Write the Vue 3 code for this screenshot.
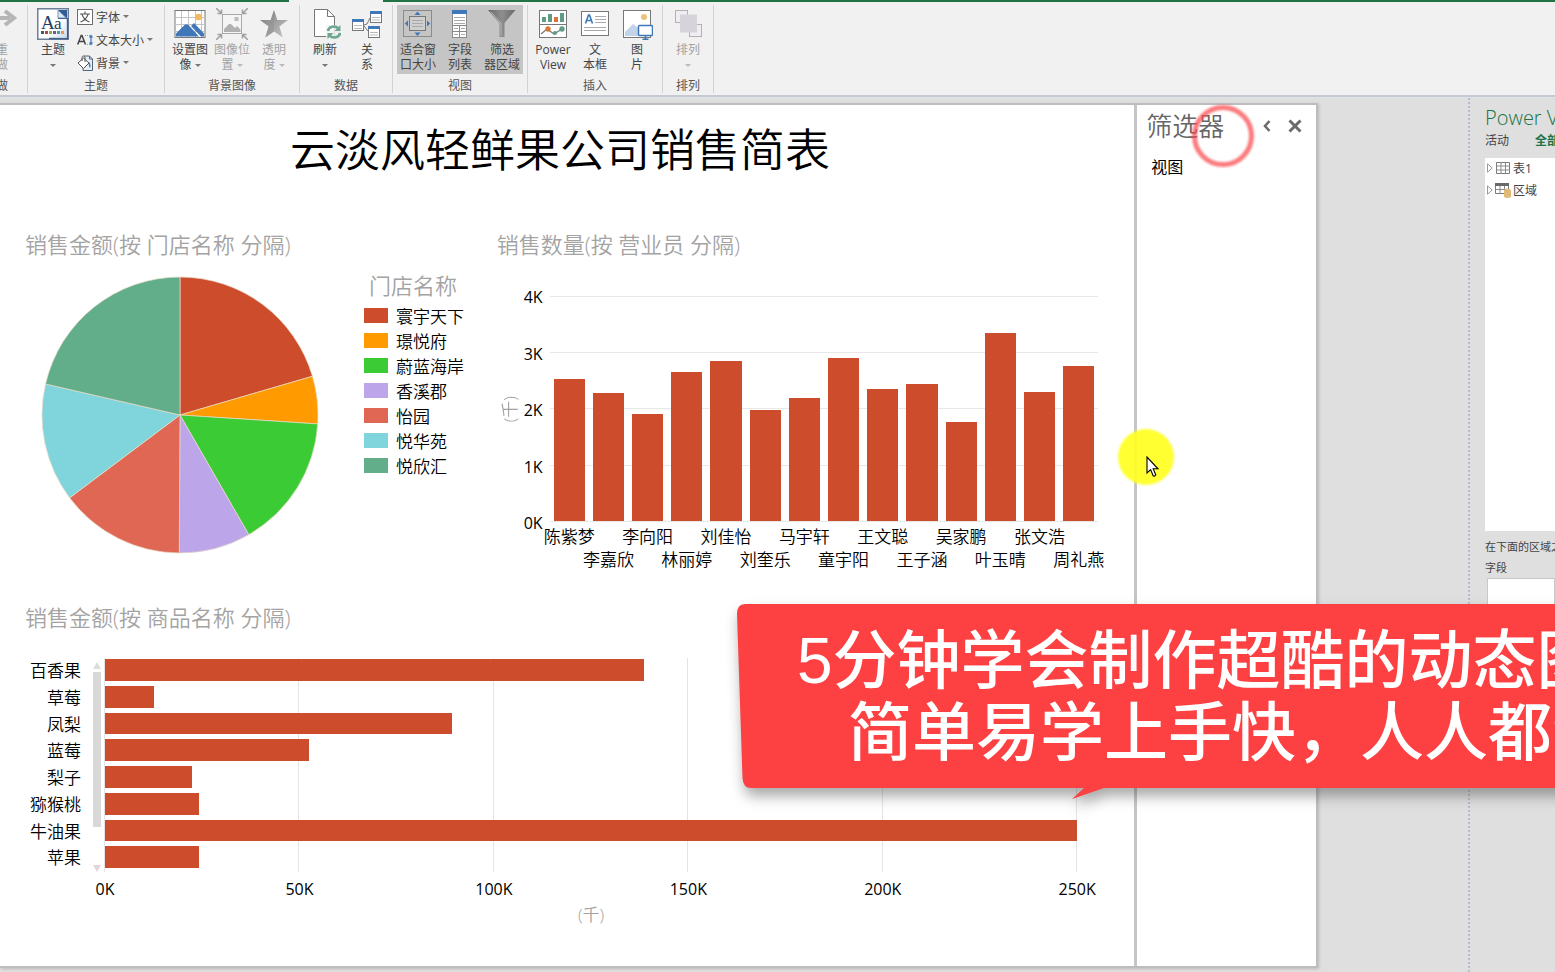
<script setup>
const ribbon = [
  {
    label: '背景图像',
    tools: [
      { icon: 'image-set', lines: ['设置图', '像'], menu: true },
      { icon: 'image-pos', lines: ['图像位', '置'], menu: true, disabled: true },
      { icon: 'star', lines: ['透明', '度'], menu: true, disabled: true },
    ],
  },
  {
    label: '数据',
    tools: [
      { icon: 'refresh', lines: ['刷新', ''], menu: true },
      { icon: 'relation', lines: ['关', '系'] },
    ],
  },
  {
    label: '视图',
    tools: [
      { icon: 'fit', lines: ['适合窗', '口大小'], on: true },
      { icon: 'fields', lines: ['字段', '列表'], on: true },
      { icon: 'funnel', lines: ['筛选', '器区域'], on: true },
    ],
  },
  {
    label: '插入',
    tools: [
      { icon: 'power-view', lines: ['Power', 'View'] },
      { icon: 'textbox', lines: ['文', '本框'] },
      { icon: 'picture', lines: ['图', '片'] },
    ],
  },
  {
    label: '排列',
    tools: [{ icon: 'arrange', lines: ['排列', ''], menu: true, disabled: true }],
  },
]

const smallTools = [
  { icon: 'font', text: '字体' },
  { icon: 'text-size', text: '文本大小' },
  { icon: 'backdrop', text: '背景' },
]

// `end` is the slice's closing angle in degrees, clockwise from twelve o'clock.
const stores = [
  { name: '寰宇天下', color: '#cd4c2c', end: 73.7 },
  { name: '璟悦府', color: '#ff9a00', end: 93.7 },
  { name: '蔚蓝海岸', color: '#3acb35', end: 150.1 },
  { name: '香溪郡', color: '#bca5e8', end: 180.3 },
  { name: '怡园', color: '#df6753', end: 233.1 },
  { name: '悦华苑', color: '#80d5dc', end: 283 },
  { name: '悦欣汇', color: '#62ae8a', end: 360 },
]

function point(angle) {
  const a = (angle * Math.PI) / 180
  return `${(139 + 138 * Math.sin(a)).toFixed(2)} ${(139 - 138 * Math.cos(a)).toFixed(2)}`
}

const slices = stores.map((s, i) => {
  const start = i ? stores[i - 1].end : 0
  return {
    ...s,
    d: `M139 139L${point(start)}A138 138 0 ${s.end - start > 180 ? 1 : 0} 1 ${point(s.end)}Z`,
  }
})

const sellers = [
  ['陈紫梦', 2530], ['李嘉欣', 2270], ['李向阳', 1910], ['林丽婷', 2650],
  ['刘佳怡', 2850], ['刘奎乐', 1970], ['马宇轩', 2190], ['童宇阳', 2890],
  ['王文聪', 2340], ['王子涵', 2440], ['吴家鹏', 1760], ['叶玉晴', 3350],
  ['张文浩', 2290], ['周礼燕', 2760],
]
const yTicks = ['4K', '3K', '2K', '1K', '0K']

const goods = [
  ['百香果', 138700], ['草莓', 12600], ['凤梨', 89200], ['蓝莓', 52400],
  ['梨子', 22400], ['猕猴桃', 24200], ['牛油果', 250200], ['苹果', 24200],
]
const xTicks = ['0K', '50K', '100K', '150K', '200K', '250K']
</script>

<template>
  <div class="app">
    <svg class="sprite" aria-hidden="true">
      <defs>
        <linearGradient id="g-theme" x1="0" y1="0" x2="1" y2="1">
          <stop offset="0" stop-color="#fff" /><stop offset=".6" stop-color="#fff" /><stop offset="1" stop-color="#c9dcf0" />
        </linearGradient>
        <linearGradient id="g-star" x1="0" y1="0" x2="1" y2="1">
          <stop offset="0" stop-color="#777" /><stop offset="1" stop-color="#c9c9c9" />
        </linearGradient>
        <linearGradient id="g-funnel" x1="0" y1="0" x2="1" y2="0">
          <stop offset="0" stop-color="#6a6a6a" /><stop offset=".5" stop-color="#8e8e8e" /><stop offset="1" stop-color="#6a6a6a" />
        </linearGradient>
      </defs>
      <symbol id="i-redo" viewBox="0 0 32 32">
        <path d="M3 10h21M19 3l9 7-9 7" fill="none" stroke="#b5b5b5" stroke-width="4" />
      </symbol>
      <symbol id="i-theme" viewBox="0 0 32 32">
        <rect x=".75" y=".75" width="30.5" height="30.5" fill="#fff" stroke="#6c7f99" stroke-width="1.5" />
        <path d="M3 3h18l8 8v18H3z" fill="url(#g-theme)" />
        <path d="M21 2h9v9h-9z" fill="#2f5d94" /><path d="M21 2v8h8.5z" fill="#dbe7f4" stroke="#5f7fa8" stroke-width=".8" />
        <path d="M30.5 10v20.5H12" fill="none" stroke="#3c5f8c" stroke-width="1.5" />
        <text x="4" y="21" font-size="19" font-family="Liberation Serif, serif" fill="#1f4064">A</text>
        <text x="17" y="21" font-size="17" font-family="Liberation Serif, serif" fill="#1f4064">a</text>
        <path d="M4 23h3v3H4z" fill="#43597a" /><path d="M8 23h3v3H8z" fill="#b04a3a" />
        <path d="M12 23h3v3h-3z" fill="#9aa64a" /><path d="M16 23h3v3h-3z" fill="#76588f" />
        <path d="M20 23h3v3h-3z" fill="#4d9ab0" /><path d="M24 23h3v3h-3z" fill="#e09a4a" />
      </symbol>
      <symbol id="i-font" viewBox="0 0 16 16">
        <rect x=".5" y=".5" width="15" height="15" fill="#fff" stroke="#6d6d6d" />
        <path d="M8 2.500v2M3 5h10M5 5.500c1 3 3.500 6 7.500 7.500M11 5.500c-1 3-3.500 6-7.500 7.500" fill="none" stroke="#555" stroke-width="1.100" />
      </symbol>
      <symbol id="i-text-size" viewBox="0 0 16 16">
        <path d="M.7 12.500L4.200 3.500h.8l3.500 9M2 9.500h5.200" fill="none" stroke="#444" stroke-width="1.500" />
        <path d="M8 3.500h5M10 12.500h3" stroke="#999" stroke-dasharray="1 1" />
        <path d="M14 4v8M12.500 5.500L14 3.500l1.500 2M12.500 10.500l1.500 2 1.500-2" fill="none" stroke="#2f75b8" stroke-width="1.200" />
      </symbol>
      <symbol id="i-backdrop" viewBox="0 0 16 16">
        <path d="M7 1h5.500l3 3v11.500H6V12" fill="#e5edf6" stroke="#55677d" />
        <path d="M12.500 1v3h3" fill="none" stroke="#55677d" />
        <path d="M1 8l5.500-5 5.500 5-5.500 5.500z" fill="#fff" stroke="#555" /><path d="M5 6V2.500C5 .5 8 .5 8 2.500V7" fill="none" stroke="#555" />
        <path d="M12 7c2 2 1.500 5 1 6-1-1-1.500-3-1-6z" fill="#3f79bd" />
      </symbol>
      <symbol id="i-image-set" viewBox="0 0 32 32">
        <rect x="1" y="2.500" width="30" height="27" fill="#fff" stroke="#777" />
        <path d="M7.500 3v26M14.500 3v26M21.500 3v26M27.500 3v26M1 9.500h30M1 16.500h30M1 23.500h30" stroke="#c4c4c4" />
        <circle cx="24.500" cy="9" r="3.300" fill="#f0b95e" />
        <path d="M2 28.500v-3l9-9h3l11 12zM17 18l3-3 10 10.500v3h-3z" fill="#3f77b9" />
      </symbol>
      <symbol id="i-image-pos" viewBox="0 0 32 32">
        <rect x="6.500" y="6.500" width="19" height="19" fill="#f5f5f5" stroke="#a9a9a9" />
        <rect x="18.500" y="9" width="4" height="4" fill="#bcbcbc" />
        <path d="M8 24v-3l5-5h2l4 4 2-2 3.500 3.500V24z" fill="#b1b1b1" />
        <path d="M0 0l5.500 5.500M1.500 5.500h4v-4M32 0l-5.500 5.500M30.500 5.500h-4v-4M0 32l5.500-5.500M1.500 26.500h4v4M32 32l-5.500-5.500M30.500 26.500h-4v4" fill="none" stroke="#a0a0a0" stroke-width="1.500" />
      </symbol>
      <symbol id="i-star" viewBox="0 0 32 32">
        <path d="M16 2l3.300 10H30l-8.600 6.500 3.300 11L16 23.500l-8.700 6 3.300-11L2 12h10.700z" fill="url(#g-star)" />
        <path d="M16 2v21.500l-8.700 6 3.300-11z" fill="#8f8f8f" opacity=".45" />
      </symbol>
      <symbol id="i-refresh" viewBox="0 0 32 32">
        <path d="M5.500 1.500h13l7 7v20h-20z" fill="#fff" stroke="#777" />
        <path d="M18.500 1.500v7h7" fill="none" stroke="#777" />
        <rect x="17" y="17" width="15" height="14" fill="#f1f1f1" opacity=".8" />
        <path d="M19 23c.5-4.500 7-6 10.500-2.500M31 25c-.5 4.500-7 6-10.500 2.500" fill="none" stroke="#6ea78f" stroke-width="2.600" />
        <path d="M31.500 17v6h-6zM18.500 31v-6h6z" fill="#6ea78f" />
      </symbol>
      <symbol id="i-relation" viewBox="0 0 32 32">
        <path d="M13 17l3-1 3-6M13 18l4 5" fill="none" stroke="#777" />
        <g fill="#fff" stroke="#777"><rect x="1.500" y="11.500" width="11" height="11" /><rect x="19.500" y="3.500" width="11" height="11" /><rect x="17.500" y="18.500" width="11" height="11" /></g>
        <path d="M1 11h12v3H1zM19 3h12v3H19zM17 18h12v3H17z" fill="#3f77b9" />
        <path d="M3 17.500h8M3 20.500h8M21 9.500h8M21 12h8M19 24.500h8M19 27h8" stroke="#bbb" />
      </symbol>
      <symbol id="i-fit" viewBox="0 0 32 32">
        <rect x="1.500" y="2.500" width="28" height="26" fill="none" stroke="#8b8b8b" />
        <rect x="7.500" y="8.500" width="16" height="14" fill="#cfcfcf" stroke="#777" />
        <path d="M10 12.500h11M10 15.500h11M10 18.500h11" stroke="#aaa" />
        <path d="M12.500 7h6l-3-3.500zM12.500 24.500h6l-3 3.500zM6 12.500v6L2.800 15.500zM25 12.500v6l3.200-3z" fill="#3f77b9" />
      </symbol>
      <symbol id="i-fields" viewBox="0 0 32 32">
        <rect x="8.500" y="2.500" width="14" height="27" fill="#fff" stroke="#8b8b8b" />
        <path d="M8 2h15v4H8z" fill="#3f77b9" />
        <path d="M10 9.500h11M10 12.500h11M10 15.500h11M10 20.500h4M17 20.500h4M10 26.500h4M17 26.500h4" stroke="#aaa" />
        <path d="M8 17.500h15M8 23.500h15M15.500 17.500v12" stroke="#888" />
      </symbol>
      <symbol id="i-funnel" viewBox="0 0 32 32">
        <path d="M2 2h27.500L18.500 15v14h-5V15z" fill="url(#g-funnel)" /><path d="M5 4l10 11v13" fill="none" stroke="#b8b8b8" />
      </symbol>
      <symbol id="i-power-view" viewBox="0 0 32 32">
        <rect x="2.500" y="2.500" width="27" height="27" fill="#fff" stroke="#777" /><path d="M3 16.500h26" stroke="#777" />
        <path d="M5 9h4v5H5zM11 6h4v8h-4zM23 5h4v9h-4z" fill="#5f9c83" /><path d="M17 9h4v5h-4z" fill="#d9773a" />
        <path d="M4 26l6-5 7 5 8-5" fill="none" stroke="#777" stroke-width="1.300" />
        <circle cx="11" cy="21" r="2.700" fill="#d9773a" /><circle cx="18" cy="25" r="2" fill="#5f9c83" /><circle cx="25" cy="21" r="2.700" fill="#5f9c83" />
      </symbol>
      <symbol id="i-textbox" viewBox="0 0 32 32">
        <rect x="2.500" y="3.500" width="27" height="24" fill="#fff" stroke="#777" />
        <path d="M6.500 15.500L9.500 7h1l3 8.500M7.500 12.500h5" fill="none" stroke="#3f77b9" stroke-width="1.600" />
        <path d="M16 8.500h11M16 11.500h11M16 14.500h11M5 19.500h22M5 22.500h22" stroke="#aaa" />
      </symbol>
      <symbol id="i-picture" viewBox="0 0 32 32">
        <rect x="2.500" y="2.500" width="27" height="27" fill="#fff" stroke="#777" />
        <circle cx="23" cy="9" r="3" fill="#eec27c" /><path d="M4 28v-4l8-8 7 5v7z" fill="#c3d3ea" />
        <rect x="17.500" y="17.500" width="14" height="10" rx="1" fill="#fff" stroke="#3f77b9" stroke-width="1.500" />
        <path d="M24.500 28v2.500M21.500 31.200h6" stroke="#3f77b9" stroke-width="1.500" />
      </symbol>
      <symbol id="i-arrange" viewBox="0 0 32 32">
        <rect x="3.500" y="2.500" width="12" height="12" fill="#f1eef3" stroke="#b5b0b8" /><rect x="17.500" y="16.500" width="12" height="12" fill="#f1eef3" stroke="#b5b0b8" />
        <rect x="8" y="6.500" width="17" height="18" fill="#d6d3db" />
      </symbol>
      <symbol id="i-table" viewBox="0 0 16 16">
        <path d="M1.500 2.500h13v11h-13z" fill="#fff" stroke="#7a7a7a" /><path d="M1.500 6h13M1.500 10h13M6 2.500v11M10.500 2.500v11" stroke="#8a8a8a" />
      </symbol>
      <symbol id="i-range" viewBox="0 0 16 16">
        <path d="M.5 2.500h13v9H.5z" fill="#fff" stroke="#7a7a7a" /><path d="M0 1h14v3H0z" fill="#6a6a6a" /><path d="M.5 7.500h13M5 4v8M9.500 4v8" stroke="#8a8a8a" />
        <path d="M9 8q3.500-3 7 0v7q-3.500 2-7 0z" fill="#e3b976" />
      </symbol>
    </svg>

    <header class="ribbon">
      <div class="accent"><i class="green before"></i><i class="tab-gap"></i><i class="green after"></i></div>
      <div class="groups">
        <section class="group cut">
          <div class="tools">
            <button class="tool" disabled><svg class="icon"><use href="#i-redo" /></svg><span>重</span><span>做</span></button>
          </div>
          <div class="group-name">做</div>
        </section>
        <section class="group theme">
          <div class="tools">
            <button class="tool"><svg class="icon"><use href="#i-theme" /></svg><span>主题</span><span><i class="caret alone"></i></span></button>
            <div class="small-tools">
              <button v-for="t in smallTools" :key="t.icon" class="small-tool">
                <svg class="small-icon"><use :href="'#i-' + t.icon" /></svg>{{ t.text }}<i class="caret"></i>
              </button>
            </div>
          </div>
          <div class="group-name">主题</div>
        </section>
        <section v-for="g in ribbon" :key="g.label" class="group">
          <div class="tools">
            <button v-for="t in g.tools" :key="t.icon" class="tool" :class="{ on: t.on }" :disabled="t.disabled">
              <svg class="icon"><use :href="'#i-' + t.icon" /></svg>
              <span>{{ t.lines[0] }}</span>
              <span>{{ t.lines[1] }}<i v-if="t.menu" class="caret" :class="{ alone: !t.lines[1] }"></i></span>
            </button>
          </div>
          <div class="group-name">{{ g.label }}</div>
        </section>
      </div>
    </header>

    <main class="workspace">
      <div class="sheet">
        <div class="report">
          <h1>云淡风轻鲜果公司销售简表</h1>
          <div class="row">
            <section class="card pie-card">
              <h2>销售金额(按 门店名称 分隔)</h2>
              <div class="pie-body">
                <svg class="pie" viewBox="0 0 278 278">
                  <path v-for="s in slices" :key="s.name" :d="s.d" :fill="s.color" />
                </svg>
                <div class="legend">
                  <h3>门店名称</h3>
                  <ul>
                    <li v-for="s in stores" :key="s.name"><i class="swatch" :style="{ background: s.color }"></i>{{ s.name }}</li>
                  </ul>
                </div>
              </div>
            </section>
            <section class="card column-card">
              <h2>销售数量(按 营业员 分隔)</h2>
              <div class="columns">
                <div class="unit-y"><span>(千)</span></div>
                <div class="y-axis"><span v-for="t in yTicks" :key="t">{{ t }}</span></div>
                <div class="plot">
                  <div v-for="s in sellers" :key="s[0]" class="slot">
                    <div class="column" :style="{ height: s[1] / 40 + '%' }"></div>
                  </div>
                </div>
                <div class="names"><span v-for="s in sellers" :key="s[0]"><b>{{ s[0] }}</b></span></div>
              </div>
            </section>
          </div>
          <section class="card bar-card">
            <h2>销售金额(按 商品名称 分隔)</h2>
            <div class="bars">
              <div class="goods"><span v-for="g in goods" :key="g[0]">{{ g[0] }}</span></div>
              <div class="scroll"><i class="up"></i><i class="thumb"></i><i class="down"></i></div>
              <div class="bar-plot">
                <div v-for="g in goods" :key="g[0]" class="lane">
                  <div class="bar" :style="{ width: g[1] / 2500 + '%' }"></div>
                </div>
              </div>
              <div class="x-axis"><span v-for="t in xTicks" :key="t"><b>{{ t }}</b></span></div>
              <div class="unit-x">(千)</div>
            </div>
          </section>
        </div>
        <aside class="filters">
          <div class="filters-head">
            <h2>筛选器</h2>
            <button aria-label="折叠"><svg width="10" height="14" viewBox="0 0 10 14"><path d="M7.500 2L3 7l4.500 5" fill="none" stroke="#6b6b6b" stroke-width="2.600" /></svg></button>
            <button aria-label="关闭"><svg width="14" height="14" viewBox="0 0 14 14"><path d="M1.500 1.500l11 11M12.500 1.500l-11 11" fill="none" stroke="#6b6b6b" stroke-width="3" /></svg></button>
          </div>
          <a href="#" class="view-link">视图</a>
        </aside>
      </div>
      <div class="desk"></div>
      <aside class="fields">
        <h2>Power View 字段</h2>
        <nav><a href="#">活动</a><a href="#" class="current">全部</a></nav>
        <ul class="tree">
          <li><svg class="twist" viewBox="0 0 6 10"><path d="M.5 .8v8.400L5.200 5z" fill="#fff" stroke="#999" /></svg><svg class="node-icon"><use href="#i-table" /></svg>表1</li>
          <li><svg class="twist" viewBox="0 0 6 10"><path d="M.5 .8v8.400L5.200 5z" fill="#fff" stroke="#999" /></svg><svg class="node-icon"><use href="#i-range" /></svg>区域</li>
        </ul>
        <p>在下面的区域之间拖动字段:</p>
        <p>字段</p>
        <div class="well"></div>
      </aside>
    </main>

    <div class="ring"></div>
    <div class="halo"></div>
    <svg class="pointer" width="14" height="22" viewBox="0 0 14 22">
      <path d="M1 1v16l3.600-3.400 2.600 6.200q1.200 1 2.600-.8L7.200 12.800H12z" fill="#fff" stroke="#000" stroke-width="1.100" />
    </svg>
    <div class="callout">
      <svg class="callout-shape" width="860" height="204" viewBox="0 0 860 204">
        <path d="M10 2H860V186H369L337 197L349 186H16Q8 186 7.500 176L2 12Q2 2 10 2Z" fill="#fd4142" />
      </svg>
      <p class="line-one">5分钟学会制作超酷的动态图</p>
      <p class="line-two">简单易学上手快，人人都会</p>
    </div>
  </div>
</template>

<style>
body { margin: 0; overflow: hidden; }
</style>

<style scoped>
.app { position: relative; display: flex; flex-direction: column; height: 100vh; overflow: hidden; background: #dfdfdf; color: #000; font-family: "Open Sans", "Noto Sans CJK SC", sans-serif; }
.app * { box-sizing: border-box; }
h1, h2, h3, p, ul { margin: 0; padding: 0; font-weight: inherit; list-style: none; }
b { font-weight: inherit; }
a { color: inherit; text-decoration: none; }
button { border: 0; padding: 0; background: none; color: inherit; font: inherit; }
.sprite { position: absolute; width: 0; height: 0; }

.ribbon { flex: none; height: 97px; background: #f1f1f1; border-bottom: 2px solid #c6cad0; font-size: 12px; color: #444; }
.accent { display: flex; height: 2px; }
.green { background: #217346; }
.before { width: 289px; }
.tab-gap { width: 94px; }
.after { flex: 1; }
.groups { display: flex; height: 93px; padding-top: 3px; }
.group { display: flex; flex-direction: column; padding: 0 4px; border-right: 1px solid #d2d2d2; margin-bottom: 2px; }
.group-name { height: 18px; margin-top: 3px; line-height: 18px; text-align: center; color: #555; }
.cut { width: 28px; overflow: hidden; }
.cut .tool { margin-left: -23px; }
.cut .group-name { margin-left: -8px; text-align: left; }
.theme { width: 137px; }
.tools { display: flex; height: 69px; }
.tool { display: flex; flex-direction: column; align-items: center; width: 42px; height: 69px; padding-top: 3px; line-height: 15px; white-space: nowrap; }
.tool:disabled { color: #a3a3a3; }
.tool.on { background: #c5c5c5; }
.icon { display: block; width: 32px; height: 32px; margin-bottom: 2px; }
.tool span { height: 15px; }
.caret { display: inline-block; margin-left: 3px; border: 3px solid transparent; border-top-color: #777; border-bottom: 0; vertical-align: 2px; }
.alone { margin-left: 0; }
.tool:disabled .caret { border-top-color: #bbb; }
.small-tools { display: flex; flex-direction: column; margin-left: 3px; }
.small-tool { display: flex; align-items: center; height: 23px; white-space: nowrap; }
.small-icon { width: 16px; height: 16px; margin-right: 3px; }

.workspace { flex: 1; display: flex; min-height: 0; border-top: 1px solid #dfe3ea; }
.sheet { flex: 1318 1 0; display: flex; min-width: 0; margin: 5px 0 4px; background: #fff; border: 2px solid #bdbdbf; border-left: 0; box-shadow: 1px 1px 3px #bbb; font-weight: 350; }
.report { flex: 1; min-width: 0; padding: 13px 30px 0 25px; }
.desk { flex: 150 1 0; }
h1 { height: 64px; margin-bottom: 47px; padding-right: 9px; font-size: 45px; line-height: 64px; text-align: center; white-space: nowrap; }
.row { display: flex; height: 373px; }
.card h2 { height: 32px; font-size: 22px; line-height: 30px; color: #a3a3a3; white-space: nowrap; }
.pie-card { flex: 472 1 0; }
.column-card { flex: 608 1 0; }
.pie-body { display: flex; padding: 10px 0 0 16px; }
.pie { flex: none; width: 278px; height: 278px; margin: 5px 45px 0 0; }
.pie path { stroke: #e8dcc8; stroke-width: 1; stroke-opacity: .7; }
.legend h3 { height: 32px; padding-left: 5px; font-size: 22px; line-height: 28px; color: #a3a3a3; }
.legend li { display: flex; align-items: center; height: 25px; font-size: 17px; white-space: nowrap; }
.swatch { width: 24px; height: 15px; margin-right: 8px; }

.columns { display: grid; grid-template: 226px auto / 26px 27px 1fr; padding: 35px 6px 0 0; }
.unit-y { display: flex; align-items: center; justify-content: center; padding-right: 2px; font-size: 17px; color: #a3a3a3; }
.unit-y span { writing-mode: vertical-rl; text-orientation: sideways; transform: rotate(180deg); }
.y-axis { display: flex; flex-direction: column; justify-content: space-between; margin: -11px 7px -13px 0; font-size: 16px; line-height: 24px; text-align: right; font-weight: 400; }
.plot { display: flex; height: 226px; background: repeating-linear-gradient(#e8e8e8 0 1px, transparent 1px 25%); border-bottom: 1px solid #e8e8e8; }
.slot { flex: 1; display: flex; align-items: flex-end; padding: 0 4px; }
.column { width: 100%; background: #cd4c2c; }
.names { grid-column: 3; display: flex; padding-top: 3px; font-size: 17px; line-height: 24px; }
.names span { flex: 1; display: flex; justify-content: center; width: 0; white-space: nowrap; }
.names span:nth-child(even) { padding-top: 23px; }

.bars { display: grid; grid-template: 214px 34px 18px / 56px 12px 12px 1fr; padding: 24px 27px 0 0; }
.goods, .bar-plot { display: flex; flex-direction: column; font-size: 17px; line-height: 26px; }
.goods span { flex: 1; display: flex; align-items: flex-start; justify-content: flex-end; white-space: nowrap; }
.scroll { grid-column: 3; display: flex; flex-direction: column; align-items: flex-start; width: 8px; padding-top: 4px; }
.up, .down { border: 4px solid transparent; }
.up { border-top: 0; border-bottom: 7px solid #ddd; }
.down { margin-top: auto; border-bottom: 0; border-top: 7px solid #e3d6d9; }
.thumb { width: 8px; height: 155px; margin-top: 3px; background: #d8d8d8; }
.bar-plot { box-shadow: -1px 0 #e4e4e4; background: repeating-linear-gradient(90deg, transparent 0 calc(20% - 1px), #e4e4e4 calc(20% - 1px) 20%); }
.lane { flex: 1; display: flex; align-items: flex-start; padding: 1px 0 4px; }
.bar { height: 100%; background: #cd4c2c; }
.x-axis { grid-column: 4; display: flex; justify-content: space-between; font-size: 16px; line-height: 34px; font-weight: 400; }
.x-axis span { display: flex; justify-content: center; width: 0; }
.unit-x { grid-column: 4; font-size: 17px; line-height: 18px; text-align: center; color: #a3a3a3; }

.filters { flex: none; width: 182px; border-left: 3px solid #c5c5c5; }
.filters-head { display: flex; align-items: center; height: 42px; padding-left: 9px; }
.filters-head h2 { width: 107px; font-size: 26px; line-height: 42px; color: #666; }
.filters-head button { display: flex; justify-content: center; width: 28px; }
.view-link { display: block; padding: 8px 0 0 14px; font-size: 16px; line-height: 24px; font-weight: 400; }

.fields { flex: none; width: 87px; padding: 7px 0 0 15px; border-left: 2px dotted #b2bfcb; overflow: hidden; color: #444; white-space: nowrap; font-size: 11px; }
.fields h2 { height: 26px; font-size: 20px; line-height: 26px; color: #217346; font-weight: 350; }
.fields nav { display: flex; gap: 26px; height: 27px; font-size: 12px; line-height: 20px; }
.current { color: #217346; font-weight: 700; }
.tree { height: 373px; margin-bottom: 5px; background: #fff; font-size: 12px; }
.tree li { display: flex; align-items: center; height: 23px; padding-left: 2px; }
.tree li:first-child { height: 20px; }
.twist { width: 6px; height: 10px; margin-right: 2px; }
.node-icon { width: 16px; height: 16px; margin-right: 2px; }
.fields p { height: 21px; line-height: 21px; }
.well { height: 200px; margin-left: 2px; background: #fff; border: 1px solid #c9c9c9; }

.ring { position: absolute; left: 1192px; top: 105px; width: 62px; height: 62px; border: 5px solid #fb4b4fbb; border-radius: 50%; filter: blur(1px); }
.halo { position: absolute; left: 1118px; top: 429px; width: 56px; height: 56px; border-radius: 50%; background: #ffff1ee8; filter: blur(1px); }
.pointer { position: absolute; left: 1146px; top: 456px; }
.callout { position: absolute; left: 735px; top: 602px; right: 0; height: 210px; color: #fff; font-family: "Liberation Sans", "Noto Sans CJK SC", sans-serif; font-size: 64px; line-height: 72px; white-space: nowrap; }
.callout-shape { position: absolute; left: 0; top: 0; filter: drop-shadow(2px 8px 7px rgba(60, 60, 60, .45)); }
.callout p { position: relative; font-weight: 500; overflow: hidden; }
.line-one { padding: 23px 0 0 62px; }
.line-two { padding-left: 113px; }
</style>
